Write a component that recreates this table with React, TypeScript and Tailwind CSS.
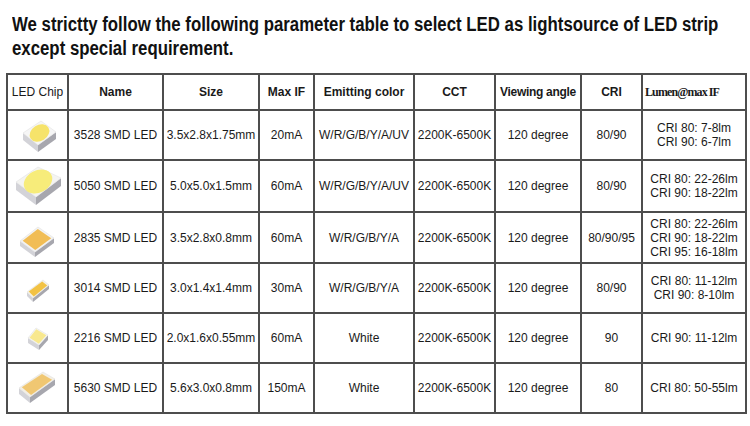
import React from 'react';

type Pt = [number, number];

interface ChipProps {
	top: [Pt, Pt, Pt, Pt];
	depth: number;
	face: string;
	inner?: 'circle' | 'inset';
	innerColor?: string;
	circle?: { cx: number; cy: number; rx: number; ry: number; rot: number };
}

const pts = (list: Pt[]) => list.map((p) => p.join(',')).join(' ');

// isometric SMD package: top face (L, T, R, B), two visible sides, optional emitter
function Chip({ top, depth, face, inner, innerColor, circle }: ChipProps) {
	const [l, t, r, b] = top;
	const down = (p: Pt): Pt => [p[0], p[1] + depth];
	const cx = (l[0] + t[0] + r[0] + b[0]) / 4;
	const cy = (l[1] + t[1] + r[1] + b[1]) / 4;
	const shrink = (p: Pt, k: number): Pt => [cx + (p[0] - cx) * k, cy + (p[1] - cy) * k];
	return (
		<svg width="60" height="48" viewBox="0 0 60 48" className="mx-auto block">
			<polygon points={pts([l, b, down(b), down(l)])} fill="#d3d3d8" />
			<polygon points={pts([b, r, down(r), down(b)])} fill="#a7a7ae" />
			<polygon points={pts([l, t, r, b])} fill={face} stroke="#e2e2e2" strokeWidth="0.6" />
			{inner === 'inset' && (
				<polygon
					points={pts([shrink(l, 0.84), shrink(t, 0.84), shrink(r, 0.84), shrink(b, 0.84)])}
					fill={innerColor}
				/>
			)}
			{inner === 'circle' && circle && (
				<ellipse
					cx={circle.cx}
					cy={circle.cy}
					rx={circle.rx}
					ry={circle.ry}
					transform={`rotate(${circle.rot} ${circle.cx} ${circle.cy})`}
					fill={innerColor}
				/>
			)}
		</svg>
	);
}

const rows = [
	{
		chip: (
			<Chip
				top={[[15, 22], [33, 10], [48, 21], [30, 34]]}
				depth={7}
				face="#f6f6f6"
				inner="circle"
				innerColor="#f6e36a"
				circle={{ cx: 31.5, cy: 22, rx: 10.5, ry: 8, rot: -32 }}
			/>
		),
		name: '3528 SMD LED',
		size: '3.5x2.8x1.75mm',
		maxIf: '20mA',
		color: 'W/R/G/B/Y/A/UV',
		cri: '80/90',
		lumen: ['CRI 80: 7-8lm', 'CRI 90: 6-7lm'],
	},
	{
		chip: (
			<Chip
				top={[[8, 20], [30, 5], [53, 16], [28, 35]]}
				depth={8}
				face="#f4f4f2"
				inner="circle"
				innerColor="#f7ec7a"
				circle={{ cx: 30, cy: 19.5, rx: 15, ry: 11, rot: -28 }}
			/>
		),
		name: '5050 SMD LED',
		size: '5.0x5.0x1.5mm',
		maxIf: '60mA',
		color: 'W/R/G/B/Y/A/UV',
		cri: '80/90',
		lumen: ['CRI 80: 22-26lm', 'CRI 90: 18-22lm'],
	},
	{
		chip: (
			<Chip
				top={[[12, 27], [30, 13], [46, 24], [27, 38]]}
				depth={5}
				face="#f3f3f3"
				inner="inset"
				innerColor="#f1bd55"
			/>
		),
		name: '2835 SMD LED',
		size: '3.5x2.8x0.8mm',
		maxIf: '60mA',
		color: 'W/R/G/B/Y/A',
		cri: '80/90/95',
		lumen: ['CRI 80: 22-26lm', 'CRI 90: 18-22lm', 'CRI 95: 16-18lm'],
	},
	{
		chip: (
			<Chip
				top={[[19, 28], [35, 16], [41, 21], [25, 34]]}
				depth={4}
				face="#f4f1e6"
				inner="inset"
				innerColor="#f2c244"
			/>
		),
		name: '3014 SMD LED',
		size: '3.0x1.4x1.4mm',
		maxIf: '30mA',
		color: 'W/R/G/B/Y/A',
		cri: '80/90',
		lumen: ['CRI 80: 11-12lm', 'CRI 90: 8-10lm'],
	},
	{
		chip: (
			<Chip
				top={[[20, 24], [28, 14], [40, 21], [31, 31]]}
				depth={5}
				face="#f6f6f2"
				inner="inset"
				innerColor="#f8e88e"
			/>
		),
		name: '2216 SMD LED',
		size: '2.0x1.6x0.55mm',
		maxIf: '60mA',
		color: 'White',
		cri: '90',
		lumen: ['CRI 90: 11-12lm'],
	},
	{
		chip: (
			<Chip
				top={[[11, 24], [35, 8], [47, 15], [22, 33]]}
				depth={6}
				face="#f3efe4"
				inner="inset"
				innerColor="#f0c772"
			/>
		),
		name: '5630 SMD LED',
		size: '5.6x3.0x0.8mm',
		maxIf: '150mA',
		color: 'White',
		cri: '80',
		lumen: ['CRI 80: 50-55lm'],
	},
];

const heights = ['h-[50px]', 'h-[52px]', 'h-[51px]', 'h-[50px]', 'h-[50px]', 'h-[50px]'];

export default function App() {
	const cell = 'border-2 border-[#4d4d4d] text-center align-middle p-0';
	return (
		<div className="h-[426px] w-[750px] overflow-hidden bg-white">
			<div
				className="pl-3 pt-[12px] text-[20px] font-bold leading-[24px] text-[#111]"
				style={{ fontFamily: '"Liberation Sans", Arial, sans-serif' }}
			>
				<div className="origin-left scale-x-[0.84] whitespace-nowrap">
					We strictty follow the following parameter table to select LED as lightsource of LED strip
				</div>
				<div className="origin-left scale-x-[0.84] whitespace-nowrap">except special requirement.</div>
			</div>
			<table
				className="ml-[6px] mt-[13px] w-[739px] table-fixed border-collapse text-[12px] leading-[14px] text-[#1a1a1a]"
				style={{ fontFamily: '"Liberation Sans", Arial, sans-serif' }}
			>
				<colgroup>
					<col className="w-[61px]" />
					<col className="w-[95px]" />
					<col className="w-[96px]" />
					<col className="w-[55px]" />
					<col className="w-[100px]" />
					<col className="w-[81px]" />
					<col className="w-[86px]" />
					<col className="w-[61px]" />
					<col className="w-[104px]" />
				</colgroup>
				<thead>
					<tr className="h-[36px]">
						<th className={`${cell} font-normal`}>LED Chip</th>
						<th className={`${cell} font-bold`}>Name</th>
						<th className={`${cell} font-bold`}>Size</th>
						<th className={`${cell} font-bold`}>Max IF</th>
						<th className={`${cell} font-bold`}>Emitting color</th>
						<th className={`${cell} font-bold`}>CCT</th>
						<th className={`${cell} font-bold tracking-[-0.3px]`}>Viewing angle</th>
						<th className={`${cell} font-bold`}>CRI</th>
						<th
							className={`${cell} pl-[2px] text-left text-[12px] font-bold tracking-[-0.9px]`}
							style={{ fontFamily: '"Liberation Serif", "Times New Roman", serif' }}
						>
							Lumen@max IF
						</th>
					</tr>
				</thead>
				<tbody>
					{rows.map((row, i) => (
						<tr key={row.name} className={heights[i]}>
							<td className={cell}>{row.chip}</td>
							<td className={cell}>{row.name}</td>
							<td className={cell}>{row.size}</td>
							<td className={cell}>{row.maxIf}</td>
							<td className={cell}>{row.color}</td>
							<td className={cell}>2200K-6500K</td>
							<td className={cell}>120 degree</td>
							<td className={cell}>{row.cri}</td>
							<td className={cell}>
								{row.lumen.map((line) => (
									<div key={line}>{line}</div>
								))}
							</td>
						</tr>
					))}
				</tbody>
			</table>
		</div>
	);
}
